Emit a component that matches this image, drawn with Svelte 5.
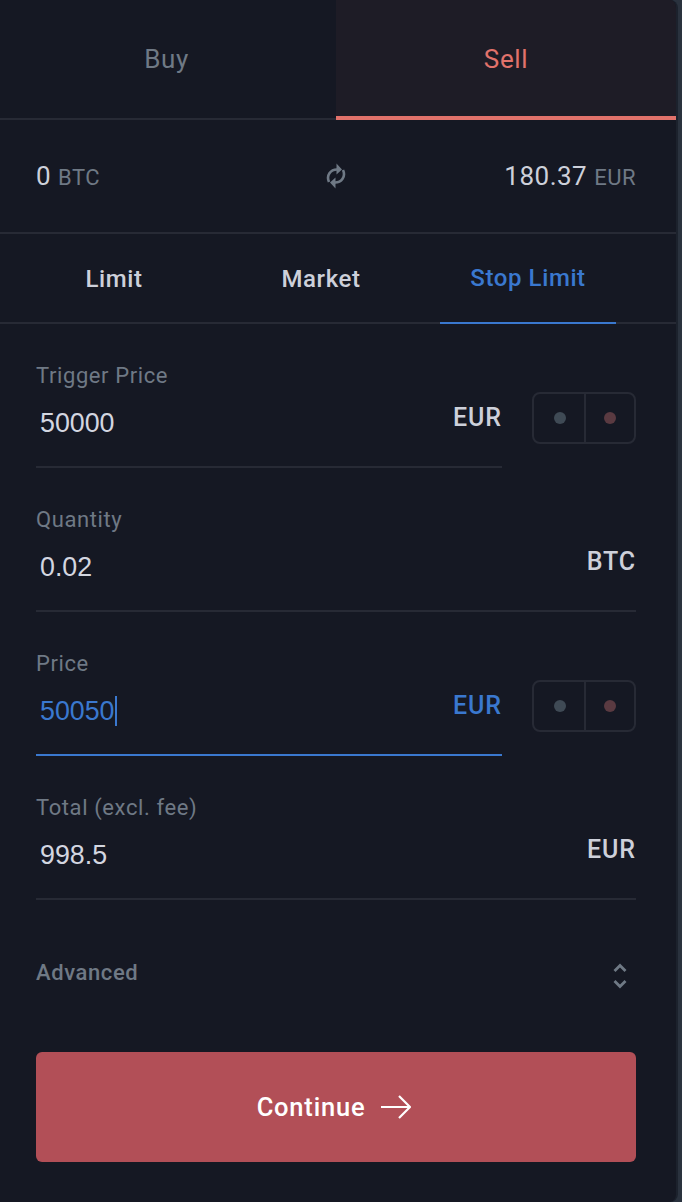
<script>
  let side = 'Sell';
  let orderType = 'Stop Limit';
  const fields = [
    { label: 'Trigger Price', value: '50000', unit: 'EUR', stepper: true },
    { label: 'Quantity', value: '0.02', unit: 'BTC' },
    { label: 'Price', value: '50050', unit: 'EUR', stepper: true, active: true },
    { label: 'Total (excl. fee)', value: '998.5', unit: 'EUR' }
  ];
</script>

<div class="panel">
  <div class="sides">
    {#each ['Buy', 'Sell'] as s}
      <button class="side {s.toLowerCase()}" class:on={side === s} on:click={() => (side = s)}>{s}</button>
    {/each}
  </div>

  <div class="balance">
    <div class="amount">0 <span>BTC</span></div>
    <svg class="swap" width="20" height="28" viewBox="0 0 20 28" fill="none">
      <path d="M3 20C0 13.500 4.500 7.500 11 7.500" stroke="currentColor" stroke-width="2.600" />
      <path d="M17 8C20 14.500 15.500 20.500 9 20.500" stroke="currentColor" stroke-width="2.600" />
      <path d="M10.500 1.500l5.500 6-5.500 5z M9.500 26.500l-5.500-6 5.500-5z" fill="currentColor" />
    </svg>
    <div class="amount">180.37 <span>EUR</span></div>
  </div>

  <div class="types">
    {#each ['Limit', 'Market', 'Stop Limit'] as t}
      <button class="type" class:on={orderType === t} on:click={() => (orderType = t)}>{t}</button>
    {/each}
  </div>

  <form class="fields" on:submit|preventDefault>
    {#each fields as f}
      <div class="row">
        <div class="field" class:active={f.active}>
          <div class="label">{f.label}</div>
          <div class="line">
            <div class="value">{f.value}{#if f.active}<i class="caret"></i>{/if}</div>
            <div class="unit">{f.unit}</div>
          </div>
        </div>
        {#if f.stepper}
          <div class="stepper">
            <div class="cell"><b class="dot grey"></b></div>
            <div class="cell"><b class="dot red"></b></div>
          </div>
        {/if}
      </div>
    {/each}

    <div class="advanced">
      <span>Advanced</span>
      <svg width="16" height="28" viewBox="0 0 16 28" fill="none" stroke="currentColor" stroke-width="2.800">
        <path d="M2.500 9L8 3.500 13.500 9M2.500 19L8 24.500 13.500 19" />
      </svg>
    </div>

    <button class="continue" type="submit">
      Continue
      <svg width="30" height="24" viewBox="0 0 30 24" fill="none" stroke="currentColor" stroke-width="2.200">
        <path d="M0 12h28M18 1l11 11-11 11" />
      </svg>
    </button>
  </form>
</div>

<style>
  :global(body) {
    background: #2a323e;
  }

  .panel {
    width: 676px;
    height: 1202px;
    background: #151823;
    border-right: 2px solid #1c222d;
    border-radius: 0 8px 8px 0;
    font-family: Roboto, sans-serif;
    overflow: hidden;
  }

  button {
    border: none;
    background: none;
    font-family: inherit;
    cursor: pointer;
    padding: 0;
  }

  .sides {
    display: flex;
    height: 120px;
  }

  .side {
    width: 336px;
    font-size: 26px;
    letter-spacing: 0.6px;
    color: #6f7985;
    border-bottom: 2px solid #272a35;
    padding-right: 3px;
  }

  .side.on {
    width: 340px;
    padding: 2px 0 0;
    background: #1e1c26;
    color: #e2726b;
    border-bottom: 4px solid #e2726b;
  }

  .balance {
    height: 112px;
    padding: 0 40px 0 36px;
    display: flex;
    align-items: center;
    justify-content: space-between;
    border-bottom: 2px solid #272a35;
    color: #6f7985;
  }

  .amount {
    font-size: 26px;
    letter-spacing: 0.5px;
    color: #cdd0da;
    width: 140px;
  }

  .amount:last-child {
    text-align: right;
  }

  .amount span {
    font-size: 22px;
    color: #6f7985;
  }

  .types {
    display: flex;
    gap: 31px;
    height: 88px;
    padding-left: 26px;
    border-bottom: 2px solid #272a35;
  }

  .type {
    width: 176px;
    height: 90px;
    font-size: 24px;
    font-weight: 500;
    letter-spacing: 0.6px;
    color: #cdd0da;
  }

  .type.on {
    color: #3a78cf;
    border-bottom: 2px solid #3a78cf;
  }

  .fields {
    padding: 0 40px 0 36px;
    display: flex;
    flex-direction: column;
  }

  .row {
    display: flex;
    gap: 30px;
    height: 144px;
    padding-top: 38px;
    box-sizing: border-box;
  }

  .field {
    flex: 1;
    height: 106px;
    border-bottom: 2px solid #272a35;
    box-sizing: border-box;
  }

  .field.active {
    border-color: #3a78cf;
  }

  .label {
    font-size: 22px;
    letter-spacing: 0.6px;
    line-height: 28px;
    color: #6f7985;
  }

  .line {
    display: flex;
    justify-content: space-between;
  }

  .value {
    font-family: "Liberation Sans", sans-serif;
    font-size: 26.800px;
    line-height: 40px;
    padding: 13px 0 0 4px;
    color: #d3d6e0;
    display: flex;
    align-items: center;
  }

  .unit {
    font-size: 25px;
    font-weight: 500;
    letter-spacing: 0.9px;
    line-height: 36px;
    margin-top: 10px;
    color: #cdd0da;
  }

  .active .value,
  .active .unit {
    color: #3a78cf;
  }

  .caret {
    display: block;
    width: 2px;
    height: 30px;
    background: #3a78cf;
  }

  .stepper {
    display: flex;
    width: 104px;
    height: 52px;
    margin-top: 30px;
    border: 2px solid #272a35;
    border-radius: 8px;
    box-sizing: border-box;
  }

  .cell {
    flex: 1;
    display: flex;
    align-items: center;
    justify-content: center;
  }

  .cell:first-child {
    padding-left: 2px;
  }

  .cell + .cell {
    border-left: 2px solid #272a35;
  }

  .dot {
    width: 12px;
    height: 12px;
    border-radius: 50%;
  }

  .grey {
    background: #3f4a55;
  }

  .red {
    background: #5a3a41;
  }

  .advanced {
    display: flex;
    justify-content: space-between;
    align-items: center;
    margin-top: 56px;
    height: 32px;
    padding-right: 8px;
    color: #6f7985;
    font-size: 22px;
    font-weight: 500;
    letter-spacing: 0.6px;
  }

  .advanced svg {
    margin-top: 8px;
  }

  .continue {
    display: flex;
    align-items: center;
    justify-content: center;
    gap: 16px;
    margin-top: 64px;
    height: 110px;
    padding-right: 4px;
    background: #b24f57;
    border-radius: 6px;
    color: #fff;
    font-size: 25.500px;
    font-weight: 500;
    letter-spacing: 0.8px;
  }
</style>
